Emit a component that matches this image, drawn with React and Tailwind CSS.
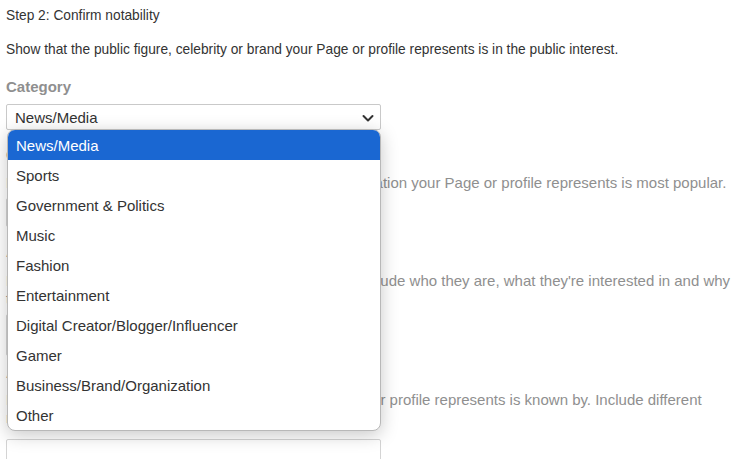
import React from 'react';

const options = [
  'News/Media',
  'Sports',
  'Government & Politics',
  'Music',
  'Fashion',
  'Entertainment',
  'Digital Creator/Blogger/Influencer',
  'Gamer',
  'Business/Brand/Organization',
  'Other',
];

const Label = ({ children, className = '' }) => (
  <div className={`text-[15px] leading-[20px] font-bold text-[#8f8f8f] ${className}`}>{children}</div>
);

const Hint = ({ children, className = '' }) => (
  <div className={`text-[15px] leading-[18px] text-[#8f8f8f] ${className}`}>{children}</div>
);

const App = () => {
  return (
    <div
      className="relative w-[747px] h-[459px] overflow-hidden bg-white text-[#333]"
      style={{ fontFamily: '"Liberation Sans", Arial, sans-serif' }}
    >
      <div className="pl-[6px] pr-[4px] pt-[6px]">
        <div className="text-[13.75px] leading-[20px]">Step 2: Confirm notability</div>
        <div className="mt-[14px] text-[13.75px] leading-[20px]">
          Show that the public figure, celebrity or brand your Page or profile represents is in the public interest.
        </div>

        <Label className="mt-[17px]">Category</Label>
        <div className="mt-[7px] w-[375px] h-[26px] border border-[#c9c9c9] rounded-[2px] flex items-center justify-between pl-[8px] pr-[5px] pt-[2px] text-[15px]">
          <span>News/Media</span>
          <svg width="14" height="14" viewBox="0 0 14 14" fill="none">
            <path d="M2.5 5L7 9.5L11.5 5" stroke="#333" strokeWidth="2" strokeLinecap="round" strokeLinejoin="round" />
          </svg>
        </div>

        {/* page content under the open menu */}
        <Label className="mt-[15px]">Country/region</Label>
        <Hint className="mt-[9px]">
          Enter the country or region where the person or organisation your Page or profile represents is most popular.
        </Hint>
        <div className="mt-[6px] w-[375px] h-[29px] border border-[#d4d4d4] rounded-[2px]" />

        <Label className="mt-[15px]">Audience (optional)</Label>
        <Hint className="mt-[10px]">
          Describe the people who follow your Page or profile. Include who they are, what they're interested in and why they follow you.
        </Hint>
        <div className="mt-[6px] w-[375px] h-[42px] border border-[#d4d4d4] rounded-[2px]" />

        <Label className="mt-[7px]">Also known as (optional)</Label>
        <Hint className="mt-[8px]">
          List other names the person or organisation your Page or profile represents is known by. Include different names in other languages.
        </Hint>
        <div className="mt-[12px] w-[375px] h-[40px] border border-[#d4d4d4] rounded-[2px]" />
      </div>

      {/* open select menu */}
      <div className="absolute left-[7px] top-[129px] w-[374px] rounded-[8px] bg-white border border-[#b8b8b8] shadow-[0_4px_18px_rgba(0,0,0,0.22)] overflow-hidden">
        {options.map((opt, i) => (
          <div
            key={opt}
            className={`h-[30px] flex items-center pl-[8px] pt-[2px] text-[15px] ${
              i === 0 ? 'bg-[#1a67d2] text-white' : 'text-[#333]'
            }`}
          >
            {opt}
          </div>
        ))}
      </div>
    </div>
  );
};

export default App;
